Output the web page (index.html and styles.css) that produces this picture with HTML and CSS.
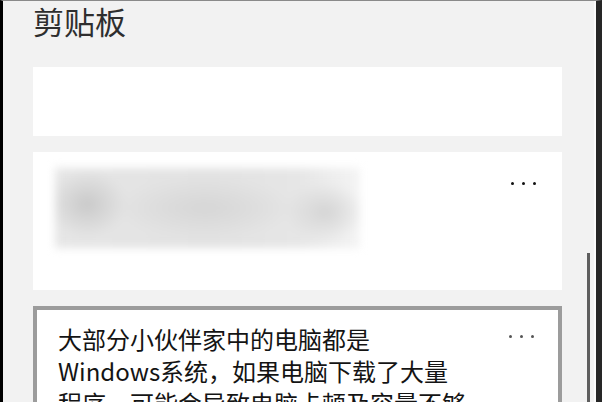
FILE: index.html
```html
<!DOCTYPE html>
<html lang="zh-CN">
<head>
<meta charset="utf-8">
<title>剪贴板</title>
<link rel="stylesheet" href="styles.css">
</head>
<body>
<div class="window">
  <div class="panel">
    <h1 class="title">剪贴板</h1>
    <div class="list">
      <div class="card card-empty"></div>
      <div class="card card-image">
        <div class="blur"></div>
        <div class="more more-image"><i></i><i></i><i></i></div>
      </div>
      <div class="card card-text">
        <p class="clip-text">大部分小伙伴家中的电脑都是<br>Windows系统，如果电脑下载了大量<br>程序，可能会导致电脑卡顿及容量不够</p>
        <div class="more more-text"><i></i><i></i><i></i></div>
      </div>
    </div>
  </div>
  <div class="scrollbar"><div class="thumb"></div></div>
</div>
</body>
</html>
```

FILE: styles.css
```css
* { box-sizing: border-box; }
html, body { margin: 0; padding: 0; background: #f2f2f2; }
body { font-family: "Noto Sans CJK SC", "Noto Sans", sans-serif; }

.window {
  display: flex;
  width: 602px;
  height: 402px;
  overflow: hidden;
  background: #f2f2f2;
  border-left: 3px solid #000;
  border-top: 1px solid #8a8a8a;
  border-right: 6px solid #262626;
}

.panel {
  width: 572px;
  flex: none;
  padding-left: 30px;
}

.title {
  margin: 0 0 26px 0;
  height: 40px;
  font-size: 31px;
  line-height: 40px;
  font-weight: 400;
  color: #2e2e2e;
}

.list {
  display: flex;
  flex-direction: column;
  gap: 16px;
  width: 529px;
}

.card {
  background: #fff;
  display: flex;
  justify-content: space-between;
  align-items: flex-start;
}

.card-empty { height: 69px; }

.card-image {
  height: 138px;
  padding: 16px 26px 0 22px;
}

.blur {
  width: 305px;
  height: 80px;
  background:
    radial-gradient(ellipse 40px 34px at 32px 36px, #c9c9c9, rgba(210,210,210,0)),
    radial-gradient(ellipse 90px 30px at 150px 40px, #d6d6d6, rgba(220,220,220,0)),
    radial-gradient(ellipse 40px 30px at 270px 44px, #d4d4d4, rgba(220,220,220,0)),
    linear-gradient(90deg, #e6e6e6 0%, #e2e2e2 50%, #e6e6e6 80%, #f4f4f4 100%);
  filter: blur(4px);
}

.more {
  display: flex;
  gap: 8px;
  flex: none;
}
.more i {
  display: block;
  width: 3px;
  height: 3px;
  border-radius: 50%;
  background: #111;
}
.more-image { margin-top: 14px; }
.more-text { margin-top: 12px; margin-right: -1px; }
.more-text i { background: #555; }

.card-text {
  height: 120px;
  border: 4px solid #9c9c9c;
  padding: 13px 25px 0 21px;
}

.clip-text {
  margin: 0;
  white-space: nowrap;
  font-size: 24px;
  line-height: 32px;
  color: #141414;
}

.scrollbar {
  width: 21px;
  flex: none;
  border-right: 2px solid #fbfbfb;
  padding-left: 12px;
}

.thumb {
  margin-top: 252px;
  width: 3px;
  height: 160px;
  background: #5e5e5e;
}
```
